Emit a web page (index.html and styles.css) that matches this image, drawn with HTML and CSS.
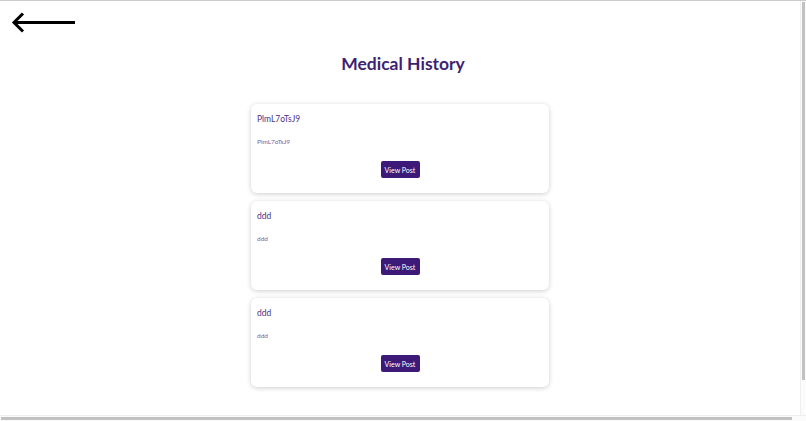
FILE: index.html
```html
<!DOCTYPE html>
<html lang="en">
<head>
<meta charset="utf-8">
<title>Medical History</title>
<link rel="stylesheet" href="styles.css">
</head>
<body>
<header class="page-head">
  <a class="back" href="#" aria-label="Back">
    <svg width="66" height="24" viewBox="0 0 66 24" aria-hidden="true">
      <polyline points="12,3.5 3,12.5 12,21.5" fill="none" stroke="#000" stroke-width="3" stroke-linejoin="miter" stroke-linecap="butt"/>
      <line x1="3" y1="12.5" x2="64" y2="12.5" stroke="#000" stroke-width="3"/>
    </svg>
  </a>
  <h1 class="title">Medical History</h1>
</header>
<main class="list">
  <article class="card">
    <h2 class="card-title">PlmL7oTsJ9</h2>
    <p class="card-text">PlmL7oTsJ9</p>
    <div class="card-actions"><button class="btn">View Post</button></div>
  </article>
  <article class="card">
    <h2 class="card-title">ddd</h2>
    <p class="card-text">ddd</p>
    <div class="card-actions"><button class="btn">View Post</button></div>
  </article>
  <article class="card">
    <h2 class="card-title">ddd</h2>
    <p class="card-text">ddd</p>
    <div class="card-actions"><button class="btn">View Post</button></div>
  </article>
</main>
<div class="scroll-v" aria-hidden="true"><div class="thumb-v"></div></div>
<div class="scroll-h" aria-hidden="true"><div class="thumb-h"></div></div>
</body>
</html>
```
FILE: styles.css
```css
html {
  background: #fff;
}
body {
  margin: 0;
  border-top: 1px solid #cccccc;
  font-family: Lato, "Noto Sans", sans-serif;
  color: #3d1f70;
  padding-bottom: 20px;
}
.page-head {
  display: flex;
  flex-direction: column;
}
.back {
  display: block;
  width: 66px;
  height: 24px;
  margin: 9px 0 0 11px;
}
.back svg {
  display: block;
}
.title {
  margin: 19px 0 29px;
  text-align: center;
  font-size: 17.5px;
  line-height: 22px;
  font-weight: 700;
  color: #3e1f73;
}
.list {
  display: flex;
  flex-direction: column;
  align-items: center;
  gap: 8px;
  padding-right: 6px;
}
.card {
  box-sizing: border-box;
  width: 298px;
  padding: 10px 6px 15px;
  background: #fff;
  border-radius: 6px;
  box-shadow: 0 1px 5px rgba(0, 0, 0, 0.2);
}
.card-title {
  margin: 0;
  font-size: 8.5px;
  line-height: 11px;
  font-weight: 400;
  color: #4b3384;
}
.card-text {
  margin: 13px 0 0;
  font-size: 6.5px;
  line-height: 8px;
  color: #7565a3;
}
.card-actions {
  display: flex;
  justify-content: center;
  margin-top: 15px;
}
.btn {
  width: 39px;
  height: 17px;
  padding: 0;
  border: 0;
  border-radius: 2px;
  background: #3d1a78;
  color: #fff;
  font-family: Lato, "Noto Sans", sans-serif;
  font-size: 7px;
  cursor: pointer;
}
.scroll-v {
  position: fixed;
  top: 1px;
  right: 0;
  bottom: 6px;
  width: 6px;
  background: #fbfbfb;
  border-left: 1px solid #efefef;
  box-sizing: border-box;
}
.thumb-v {
  margin: 1px 0 0 1px;
  width: 3px;
  height: 378px;
  background: #c1c1c1;
}
.scroll-h {
  position: fixed;
  left: 0;
  right: 0;
  bottom: 0;
  height: 6px;
  background: #fbfbfb;
  border-top: 1px solid #efefef;
  box-sizing: border-box;
}
.thumb-h {
  margin: 1px 0 0 1px;
  width: 791px;
  height: 3px;
  background: #c1c1c1;
}
```
